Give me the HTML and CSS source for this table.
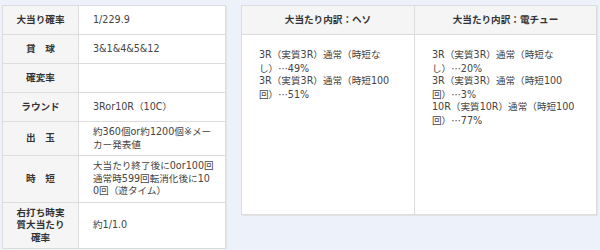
FILE: index.html
```html
<!DOCTYPE html>
<html lang="ja">

<head>
    <meta charset="UTF-8">
    <meta name="viewport" content="width=device-width, initial-scale=1.0">
    <title>機種スペック</title>
    <link rel="stylesheet" href="styles.css">
</head>

<body>
    <div class="wrapper">
        <table class="spec">
            <tr>
                <th>大当り確率</th>
                <td>1/229.9</td>
            </tr>
            <tr>
                <th>貸　球</th>
                <td>3&amp;1&amp;4&amp;5&amp;12</td>
            </tr>
            <tr>
                <th>確変率</th>
                <td></td>
            </tr>
            <tr>
                <th>ラウンド</th>
                <td>3Ror10R（10C）</td>
            </tr>
            <tr>
                <th>出　玉</th>
                <td>約360個or約1200個※メーカー発表値</td>
            </tr>
            <tr>
                <th>時　短</th>
                <td>大当たり終了後に0or100回通常時599回転消化後に100回（遊タイム）</td>
            </tr>
            <tr>
                <th>右打ち時実質大当たり確率</th>
                <td>約1/1.0</td>
            </tr>
        </table>

        <table class="breakdown">
            <tr>
                <th>大当たり内訳：ヘソ</th>
                <th>大当たり内訳：電チュー</th>
            </tr>
            <tr>
                <td class="heso">
                    <div>3R（実質3R）通常（時短なし）<span class="dots">…</span>49%</div>
                    <div>3R（実質3R）通常（時短100回）<span class="dots">…</span>51%</div>
                </td>
                <td class="denchu">
                    <div>3R（実質3R）通常（時短なし）<span class="dots">…</span>20%</div>
                    <div>3R（実質3R）通常（時短100回）<span class="dots">…</span>3%</div>
                    <div>10R（実質10R）通常（時短100回）<span class="dots">…</span>77%</div>
                </td>
            </tr>
        </table>
    </div>
</body>

</html>
```

FILE: styles.css
```css
body {
    margin: 0;
    padding: 5px 3px 0 2px;
    background-color: #edf1f9;
    font-family: "DejaVu Sans", "Noto Sans CJK JP", sans-serif;
    font-size: 9.6px;
    line-height: 12.5px;
    color: #444;
}

.wrapper {
    display: flex;
    align-items: flex-start;
    gap: 15px;
}

table {
    border-collapse: collapse;
    background: white;
    box-shadow: 1px 1px 0 #e3e3e3;
}

th,
td {
    border: 1px solid #dcdcdc;
    word-break: break-all;
}

/* left: spec list */
.spec {
    width: 224px;
    table-layout: fixed;
}

.spec th {
    width: 55px;
    height: 20px;
    padding: 4px 10px;
    background-color: #f5f5f5;
    font-weight: bold;
    color: #333;
    text-align: center;
}

.spec td {
    padding: 4px 10px 4px 14px;
    text-align: left;
}

/* right: breakdown of hits */
.breakdown {
    width: 356px;
    table-layout: fixed;
}

.breakdown th {
    height: 20px;
    padding: 4px 10px;
    background-color: #f5f5f5;
    font-weight: bold;
    color: #333;
}

.breakdown th:first-child {
    width: 152px;
}

.breakdown td {
    height: 153px;
    padding: 14px 20px 12px 17px;
    vertical-align: top;
}

.breakdown td.denchu {
    padding-right: 18px;
}

/* centred CJK ellipsis */
.dots {
    font-family: "Noto Sans CJK JP", sans-serif;
}
```
